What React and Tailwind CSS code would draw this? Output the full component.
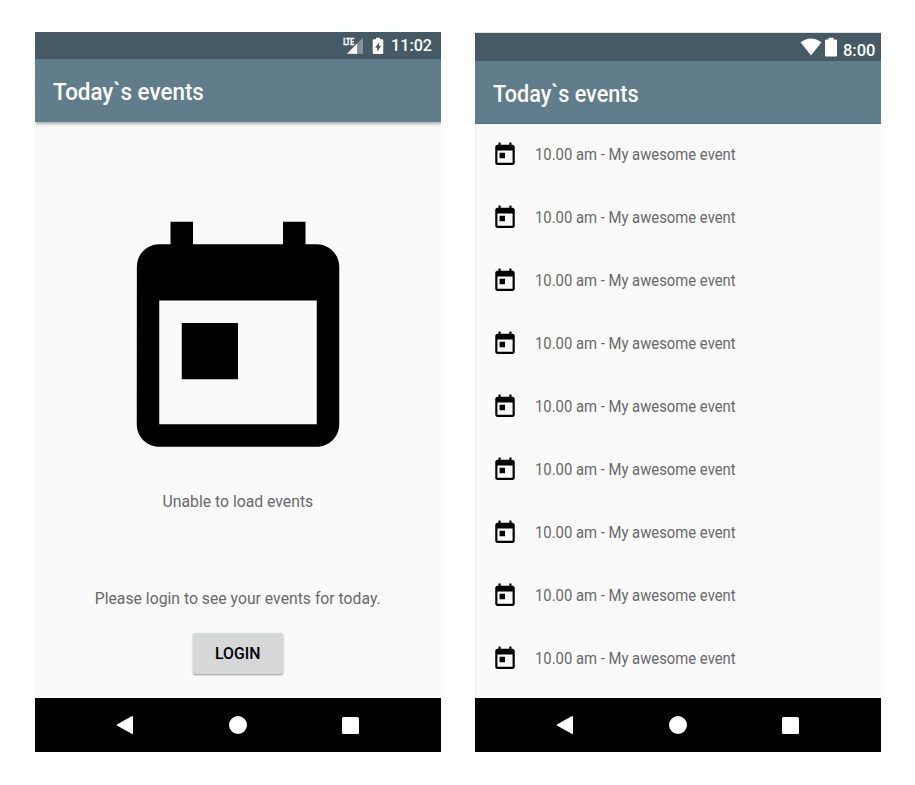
import React from "react";

const EVENTS = Array.from({ length: 9 }, (_, i) => ({ id: i, text: "10.00 am - My awesome event" }));

function TodayIcon({ className, viewBox = "0 0 24 24" }) {
  return (
    <svg viewBox={viewBox} preserveAspectRatio="none" fill="#000" className={className}>
      <path d="M19 3h-1V1h-2v2H8V1H6v2H5c-1.11 0-1.99.9-1.99 2L3 19c0 1.1.89 2 2 2h14c1.1 0 2-.9 2-2V5c0-1.1-.9-2-2-2zm0 16H5V8h14v11zM7 10h5v5H7z" />
    </svg>
  );
}

function NavBar() {
  return (
    <nav className="flex h-[54px] shrink-0 items-center bg-black pl-[81px]">
      <svg viewBox="0 0 18 20" className="h-5 w-[18px]" fill="#fff">
        <path d="M1.4 9.2 15.6 1.2Q17 .6 17 2V18Q17 19.4 15.6 18.8L1.4 10.8Q.2 10 1.4 9.2Z" />
      </svg>
      <span className="ml-[95px] size-[18px] rounded-full bg-white" />
      <span className="ml-[95px] size-[17px] rounded-[1.5px] bg-white" />
    </nav>
  );
}

function LoginScreen() {
  return (
    <section className="flex h-[720px] w-[406px] flex-col bg-[#fafafa]">
      <div className="flex h-[27px] shrink-0 items-center justify-end bg-[#455a64] pr-[9px] text-white">
        <svg viewBox="0 0 22 18" className="h-[18px] w-[22px]">
          <path d="M5 16.7 21 .8V16.7Z" fill="#fff" fillOpacity=".35" />
          <path d="M5 16.7 15 6.7V16.7Z" fill="#fff" />
          <path d="M0 0H13V9H0Z" fill="#455a64" />
          <path d="M13 16.7V8.8L15 6.7V16.7Z" fill="#fff" />
          <text x="1.2" y="8.2" fill="#fff" stroke="#fff" strokeWidth=".35" fontFamily="Roboto, sans-serif" fontSize="9.8" fontWeight="700" textLength="11" lengthAdjust="spacingAndGlyphs">LTE</text>
        </svg>
        <svg viewBox="0 0 12 18" className="ml-[8px] h-[18px] w-3">
          <path fill="#fff" fillRule="evenodd" d="M4 .8H8V2.3H10Q11.3 2.3 11.3 3.6V15.8Q11.3 17.1 10 17.1H2Q.7 17.1 .7 15.8V3.6Q.7 2.3 2 2.3H4ZM7.2 5 3.2 10.8H5.3V15L9 8.8H7Z" />
        </svg>
        <span className="ml-[7px] w-[41px] pt-px text-[16.5px] leading-[26px] font-medium whitespace-nowrap"><span className="inline-block origin-left scale-x-[0.98]">11:02</span></span>
      </div>
      <header className="flex h-[63px] shrink-0 items-center bg-[#607d8b] pl-[18px] text-[23.5px] font-medium text-white shadow-[0_2px_3px_rgba(0,0,0,0.3)] [clip-path:inset(0_0_-6px_0)]">
        <h1 className="origin-left scale-x-[0.953] pt-[4px]">Today`s events</h1>
      </header>
      <main className="flex min-h-0 flex-1 flex-col items-center text-[16.5px] text-[#696969]">
        <TodayIcon viewBox="0 -0.04 24 24" className="mt-[88px] size-[270px] shrink-0" />
        <p className="mt-[10px] scale-x-[0.955] leading-6">Unable to load events</p>
        <p className="mt-[73px] scale-x-[0.955] leading-6">Please login to see your events for today.</p>
        <button className="mt-[22px] mr-px h-[41px] w-[90px] shrink-0 rounded-[2px] bg-[#d6d7d7] pt-px text-[16.5px] font-medium text-black shadow-[0_1px_2px_rgba(0,0,0,0.4)]"><span className="inline-block scale-x-[0.955]">LOGIN</span></button>
      </main>
      <NavBar />
    </section>
  );
}

function EventsScreen() {
  return (
    <section className="flex h-[720px] w-[406px] flex-col bg-[#fafafa]">
      <div className="flex h-[29px] shrink-0 items-center justify-end border-t border-[#dfe3e5] bg-[#455a64] pr-[5px] text-white">
        <svg viewBox="0 0 22 18" className="h-[18px] w-[22px]" fill="#fff">
          <path d="M.5 4.3Q11-3.5 21.5 4.3L11 17.5Z" />
        </svg>
        <svg viewBox="0 0 12 20" className="ml-[3px] h-5 w-3" fill="#fff">
          <path d="M3.5 .8H8.5V2.6H10.8Q12 2.6 12 3.8V18.2Q12 19.4 10.8 19.4H1.2Q0 19.4 0 18.2V3.8Q0 2.6 1.2 2.6H3.5Z" />
        </svg>
        <span className="ml-[6px] w-[33px] pt-[6px] text-[17px] leading-[20px] font-medium whitespace-nowrap"><span className="inline-block origin-left scale-x-[0.97]">8:00</span></span>
      </div>
      <header className="flex h-[63px] shrink-0 items-center border-b border-[#526f7c] bg-[#607d8b] pl-[18px] text-[23.5px] font-medium text-white">
        <h1 className="origin-left scale-x-[0.92] pt-[6px]">Today`s events</h1>
      </header>
      <ul className="min-h-0 flex-1 overflow-hidden border-l border-[#f0f0f0] text-[16.5px] text-[#696969]">
        {EVENTS.map((event) => (
          <li key={event.id} className="flex h-[63px] items-center pl-[16px] first:-mt-px">
            <TodayIcon viewBox="0 -0.44 24 24" className="h-[27px] w-[26px] shrink-0" />
            <span className="ml-[17px] origin-left scale-x-[0.899] pt-[2px]">{event.text}</span>
          </li>
        ))}
      </ul>
      <NavBar />
    </section>
  );
}

export default function App() {
  return (
    <div className="flex h-[785px] w-[915px] gap-[34px] overflow-hidden bg-white pt-[32px] pl-[35px] font-[Roboto,sans-serif]">
      <LoginScreen />
      <EventsScreen />
    </div>
  );
}
